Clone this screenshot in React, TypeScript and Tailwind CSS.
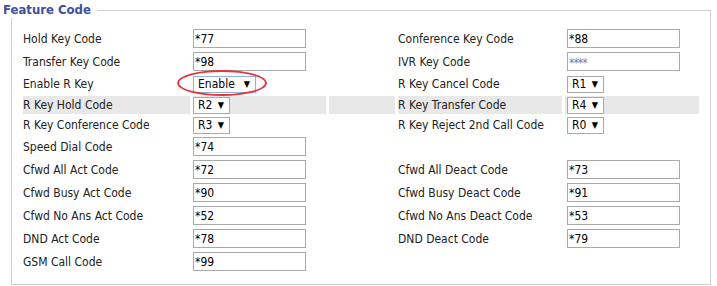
type Field =
  | { kind: 'input'; value: string; dim?: boolean }
  | { kind: 'select'; value: string; width: string; focus?: boolean };

type Row = {
  h: string;
  gray?: boolean;
  left: [string, Field];
  right?: [string, Field];
};

const rows: Row[] = [
  { h: 'h-[21px]', left: ['Hold Key Code', { kind: 'input', value: '*77' }], right: ['Conference Key Code', { kind: 'input', value: '*88' }] },
  { h: 'h-[21px]', left: ['Transfer Key Code', { kind: 'input', value: '*98' }], right: ['IVR Key Code', { kind: 'input', value: '****', dim: true }] },
  { h: 'h-[20px]', left: ['Enable R Key', { kind: 'select', value: 'Enable', width: 'w-[63px]', focus: true }], right: ['R Key Cancel Code', { kind: 'select', value: 'R1', width: 'w-[37px]' }] },
  { h: 'h-[18px]', gray: true, left: ['R Key Hold Code', { kind: 'select', value: 'R2', width: 'w-[37px]' }], right: ['R Key Transfer Code', { kind: 'select', value: 'R4', width: 'w-[37px]' }] },
  { h: 'h-[18px]', left: ['R Key Conference Code', { kind: 'select', value: 'R3', width: 'w-[37px]' }], right: ['R Key Reject 2nd Call Code', { kind: 'select', value: 'R0', width: 'w-[37px]' }] },
  { h: 'h-[21px]', left: ['Speed Dial Code', { kind: 'input', value: '*74' }] },
  { h: 'h-[21px]', left: ['Cfwd All Act Code', { kind: 'input', value: '*72' }], right: ['Cfwd All Deact Code', { kind: 'input', value: '*73' }] },
  { h: 'h-[21px]', left: ['Cfwd Busy Act Code', { kind: 'input', value: '*90' }], right: ['Cfwd Busy Deact Code', { kind: 'input', value: '*91' }] },
  { h: 'h-[21px]', left: ['Cfwd No Ans Act Code', { kind: 'input', value: '*52' }], right: ['Cfwd No Ans Deact Code', { kind: 'input', value: '*53' }] },
  { h: 'h-[21px]', left: ['DND Act Code', { kind: 'input', value: '*78' }], right: ['DND Deact Code', { kind: 'input', value: '*79' }] },
  { h: 'h-[21px]', left: ['GSM Call Code', { kind: 'input', value: '*99' }] },
];

function Control({ field }: { field: Field }) {
  if (field.kind === 'input') {
    return (
      <div className="w-[113px] h-[19px] border border-[#a9a9a9] bg-white flex items-center pl-[1px] leading-none">
        <span className={field.dim ? 'text-[#6f7fae] text-[12px] tracking-[-1px] pt-[3px]' : 'text-black'}>{field.value}</span>
      </div>
    );
  }
  return (
    <div
      className={`${field.width} h-[17px] border ${field.focus ? 'border-[#8fb0e0]' : 'border-[#a9a9a9]'} bg-white flex items-center justify-between pl-[4px] pr-[5px] leading-none`}
    >
      <span className="text-black">{field.value}</span>
      <span className="text-[9px] text-black">▼</span>
    </div>
  );
}

function Cell({ gray, children, className = '' }: { gray?: boolean; children?: React.ReactNode; className?: string }) {
  return <div className={`h-full flex items-center ${gray ? 'bg-[#e8e8e8]' : ''} ${className}`}>{children}</div>;
}

export default function App() {
  return (
    <div className="w-[717px] h-[286px] bg-white overflow-hidden pt-[10px] pl-[11px] text-[12px] text-[#222] font-['DejaVu_Sans_Condensed','Liberation_Sans',sans-serif]">
      <div className="relative w-[700px] h-[275px] border border-[#d0d0d0] pt-[17px] pl-[11px]">
        {/* legend sits over the top-left corner of the border */}
        <div className="absolute left-[-9px] top-[-11px] w-[94px] h-[18px] bg-white text-[13px] font-bold text-[#3d4f9f] leading-[20px]">
          Feature Code
        </div>

        <div className="flex flex-col gap-[2px]">
          {rows.map((row, i) => (
            <div key={i} className={`grid grid-cols-[167px_133px_66px_164px_134px] gap-x-[3px] ${row.h}`}>
              <Cell gray={row.gray}>{row.left[0]}</Cell>
              <Cell gray={row.gray}>
                <Control field={row.left[1]} />
              </Cell>
              <Cell gray={row.gray} />
              <Cell gray={row.gray && !!row.right}>{row.right?.[0]}</Cell>
              <Cell gray={row.gray && !!row.right} className="pl-[2px]">
                {row.right && <Control field={row.right[1]} />}
              </Cell>
            </div>
          ))}
        </div>

        {/* red annotation ring around the Enable select */}
        <div className="absolute left-[165px] top-[59px] w-[90px] h-[26px] rounded-[50%] border-2 border-[#e2373c]" />
      </div>
    </div>
  );
}
